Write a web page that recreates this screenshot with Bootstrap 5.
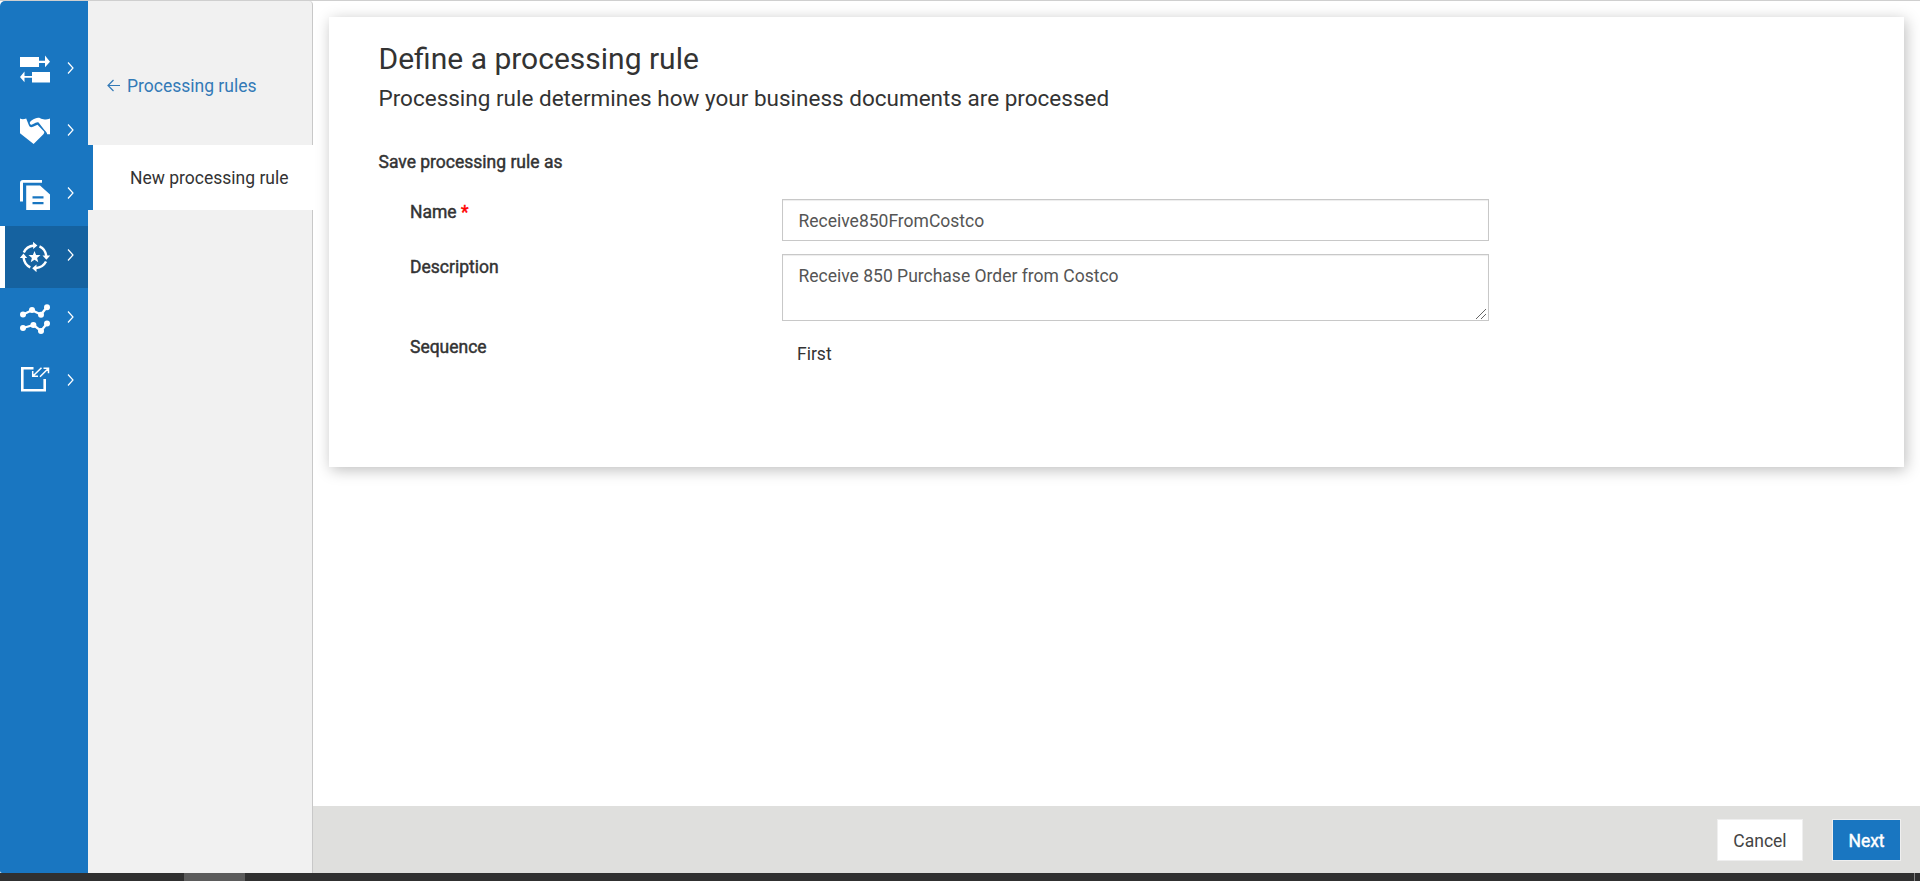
<!DOCTYPE html>
<html lang="en">
<head>
<meta charset="utf-8">
<meta name="viewport" content="width=device-width, initial-scale=1">
<title>Define a processing rule</title>
<link href="https://cdn.jsdelivr.net/npm/bootstrap@5.3.0/dist/css/bootstrap.min.css" rel="stylesheet">
<style>
  body { font-family: Roboto, "Liberation Sans", sans-serif; font-size: 17.5px; line-height: 25px; color: #333; border-top: 1px solid #cfcfcf; background: #fff; }
  .rail { width: 88px; background: #1976c1; border-radius: 5px 0 0 2px; padding-top: 37.7px; }
  .rail .nav-link { height: 62.4px; padding: 0 0 4px 20px; color: #fff; gap: 17px; }
  .rail .nav-link.current { background: #1562a0; padding-left: 15px; border-left: 5px solid #fff; }
  .drop-1 { margin-top: 2px; }
  .drop-2 { margin-top: 4px; }
  .subnav { width: 225px; background: #f1f1f1; border-right: 1px solid #c8c8c8; border-top-right-radius: 4px; padding-top: 72px; }
  .back { height: 26px; margin: 0 0 46px 19px; color: #337ab7; gap: 7px; }
  .back svg { margin-bottom: 2px; }
  .subitem { height: 65px; margin-right: -1px; background: #fff; border-left: 5px solid #1976c1; padding: 2px 0 0 37px; }
  .panel { margin: 16px 16px 0; height: 450px; border: 0; border-radius: 0; padding: 24px 49.5px; box-shadow: 2px 3px 14px rgba(0,0,0,.26); color: #333; }
  .title-line { font-size: 30px; line-height: 36px; font-weight: 400; margin: 0 0 4px; }
  .sub-line { font-size: 22.5px; line-height: 34px; font-weight: 400; margin: 0 0 35px; }
  .strong-text { -webkit-text-stroke: .45px currentColor; }
  .needed { color: #f00; }
  .fields { padding-left: 31.5px; margin-top: 24px; }
  .field-label { width: 372px; }
  label.field-label { padding-top: 1px; }
  .form-control { width: 707px; font-size: 17.5px; line-height: 25px; border: 1px solid #c8c8c8; border-radius: 0; color: #555; padding: 9px 15px 7px 15.5px; box-shadow: inset 0 1px 1px rgba(0,0,0,.075); }
  input.form-control { height: 42px; margin-bottom: 13px; }
  textarea.form-control { height: 67px; min-height: 67px; resize: none; }
  .grip { right: 3px; bottom: 2px; }
  .sequence { margin-top: 14px; }
  .sequence-value { padding: 7px 0 0 15px; }
  .actions { height: 67px; background: #dfdfdd; padding-right: 19px; gap: 29px; }
  .btn { height: 42px; border-radius: 0; border: 1px solid #efefef; font-size: 17.5px; line-height: 25px; padding: 3px 0 0; }
  .btn-cancel, .btn-cancel:hover { width: 86px; background: #fff; color: #444; }
  .btn-next, .btn-next:hover { width: 69px; background: #1976c1; color: #fff; }
  .dock { height: 8px; background: #303030; }
  .dock-tab { width: 61px; margin-left: 184px; background: #5b5b5b; }
  .dock-edge { width: 1px; margin-right: 5px; background: #858585; }
</style>
</head>
<body class="vh-100 overflow-hidden d-flex flex-column">
<div class="d-flex flex-grow-1">
  <nav class="rail nav flex-column flex-nowrap flex-shrink-0">
    <a class="nav-link d-flex align-items-center" href="#" aria-label="Transactions">
      <svg class="drop-1" width="30" height="30" viewBox="0 0 30 30" fill="#fff"><path d="M0 3h19v3.800h6V1.600L30 7.800l-5 5.400V9h-6v4H0zM30 28.500H12v-4.700H4.500v4.500L0 23l4.500-5.600v4.600H12v-4h18z"/></svg>
      <svg width="8" height="14" viewBox="0 0 8 14" fill="none" stroke="#fff" stroke-width="1.200"><path d="M1 1.500 6 7 1 12.500"/></svg>
    </a>
    <a class="nav-link d-flex align-items-center" href="#" aria-label="Partners">
      <svg class="drop-1" width="30" height="30" viewBox="0 0 30 30" fill="#fff"><path d="M0 2.500c2 1 4 .8 6.200-.1L9 9.500c.8 2 2.500 2 4 1.200l4.500-2 6.500 6.800c.8 1-.1 2.200-1.100 3.200L13.600 28 0 17.200zM9.700 6.800c1-2.200 3-3 5.500-4.200 3-1.800 5-.6 7 .5 2.500 1 5 .2 7.800-.7v15.800h-2.800c-.3-2-1.500-3-2.800-4.300l-5.800-7.300c-1-.7-1.900-.3-3 .2l-3.500 1.700c-1.200.8-2.200-.1-2.400-1.700z"/></svg>
      <svg width="8" height="14" viewBox="0 0 8 14" fill="none" stroke="#fff" stroke-width="1.200"><path d="M1 1.500 6 7 1 12.500"/></svg>
    </a>
    <a class="nav-link d-flex align-items-center" href="#" aria-label="Documents">
      <svg class="drop-2" width="30" height="30" viewBox="0 0 30 30" fill="#fff"><path d="M3 0h19v2.800H3v18.700H0V3q0-3 3-3z"/><path fill-rule="evenodd" d="M6.200 5.500H20L30 14.500V30H6.200zM12.500 16.300v2.200h11v-2.200zm0 5.700v2.200h11V22z"/></svg>
      <svg width="8" height="14" viewBox="0 0 8 14" fill="none" stroke="#fff" stroke-width="1.200"><path d="M1 1.500 6 7 1 12.500"/></svg>
    </a>
    <a class="nav-link current d-flex align-items-center" href="#" aria-label="Processing rules">
      <svg class="drop-2" width="30" height="30" viewBox="0 0 30 30" fill="#fff"><g fill="none" stroke="#fff" stroke-width="2.400"><path d="M3.800 10.500Q6.500 4.300 14 3.500"/><path d="M19.500 4.300Q25.500 7 26.300 14M26 19.500Q23 25.400 15.800 26.100M10.300 25.300Q4.300 22.500 3.600 15.600"/></g><path d="M13-.2 17.400 3.500 13.200 7zM22.500 13.500h7.700l-3.800 4.200zM16.500 22.600v7.600l-4.300-3.900zM-.2 16l3.700-4.400L7.200 16zM14.500 9l1.600 4.100h4.400l-3.400 2.800 1.200 4.400-3.800-2.500-3.800 2.500 1.200-4.400-3.400-2.800h4.400z"/></svg>
      <svg width="8" height="14" viewBox="0 0 8 14" fill="none" stroke="#fff" stroke-width="1.200"><path d="M1 1.500 6 7 1 12.500"/></svg>
    </a>
    <a class="nav-link d-flex align-items-center" href="#" aria-label="Reports">
      <svg class="drop-2" width="30" height="30" viewBox="0 0 30 30" fill="#fff"><path fill="none" stroke="#fff" stroke-width="2.300" d="m3 10.500 9-4.200 9 4.200 6-7.500M3 24l10.500-3L21 27l6-7.500"/><circle cx="3" cy="10.500" r="3"/><circle cx="12" cy="6" r="3"/><circle cx="21" cy="10.700" r="3"/><circle cx="27" cy="3.200" r="3"/><circle cx="3" cy="24" r="3"/><circle cx="13.400" cy="21" r="3"/><circle cx="21" cy="27" r="3"/><circle cx="27" cy="19.500" r="3"/></svg>
      <svg width="8" height="14" viewBox="0 0 8 14" fill="none" stroke="#fff" stroke-width="1.200"><path d="M1 1.500 6 7 1 12.500"/></svg>
    </a>
    <a class="nav-link d-flex align-items-center" href="#" aria-label="Export">
      <svg width="30" height="30" viewBox="0 0 30 30" fill="none" stroke="#fff"><path stroke-width="2.600" d="M13.500 3.300H2.300V25.200h22.400V14"/><path stroke-width="1.500" d="m21.500 2.700-8.500 8.300M12.700 6v5.300h5.300M20 11.700l8-8M23.500 3.200h5v5"/></svg>
      <svg width="8" height="14" viewBox="0 0 8 14" fill="none" stroke="#fff" stroke-width="1.200"><path d="M1 1.500 6 7 1 12.500"/></svg>
    </a>
  </nav>
  <aside class="subnav flex-shrink-0">
    <a class="back d-flex align-items-center text-decoration-none" href="#">
      <svg width="13" height="13" viewBox="0 0 13 13" fill="none" stroke="#337ab7" stroke-width="1.200"><path d="M13 6.500H1M6.500 1 1 6.500 6.500 12"/></svg>
      <span>Processing rules</span>
    </a>
    <div class="subitem d-flex align-items-center">New processing rule</div>
  </aside>
  <main class="d-flex flex-column flex-grow-1">
    <section class="panel card">
      <h1 class="title-line">Define a processing rule</h1>
      <h2 class="sub-line">Processing rule determines how your business documents are processed</h2>
      <div class="strong-text">Save processing rule as</div>
      <form class="fields">
        <div class="d-flex align-items-start">
          <label class="field-label strong-text" for="rule-name">Name <span class="needed">*</span></label>
          <input class="form-control" id="rule-name" value="Receive850FromCostco">
        </div>
        <div class="d-flex align-items-start">
          <label class="field-label strong-text" for="rule-desc">Description</label>
          <div class="position-relative">
            <textarea class="form-control" id="rule-desc">Receive 850 Purchase Order from Costco</textarea>
            <svg class="grip position-absolute" width="10" height="10" viewBox="0 0 10 10" stroke="#555" stroke-width=".9"><path d="M0 10 10 0M5 10l5-5"/></svg>
          </div>
        </div>
        <div class="sequence d-flex align-items-start">
          <span class="field-label strong-text">Sequence</span>
          <span class="sequence-value">First</span>
        </div>
      </form>
    </section>
    <footer class="actions d-flex align-items-center justify-content-end mt-auto">
      <button class="btn btn-cancel">Cancel</button>
      <button class="btn btn-next strong-text">Next</button>
    </footer>
  </main>
</div>
<div class="dock d-flex justify-content-between flex-shrink-0"><span class="dock-tab"></span><span class="dock-edge"></span></div>
<script src="https://cdn.jsdelivr.net/npm/bootstrap@5.3.0/dist/js/bootstrap.bundle.min.js"></script>
</body>
</html>
